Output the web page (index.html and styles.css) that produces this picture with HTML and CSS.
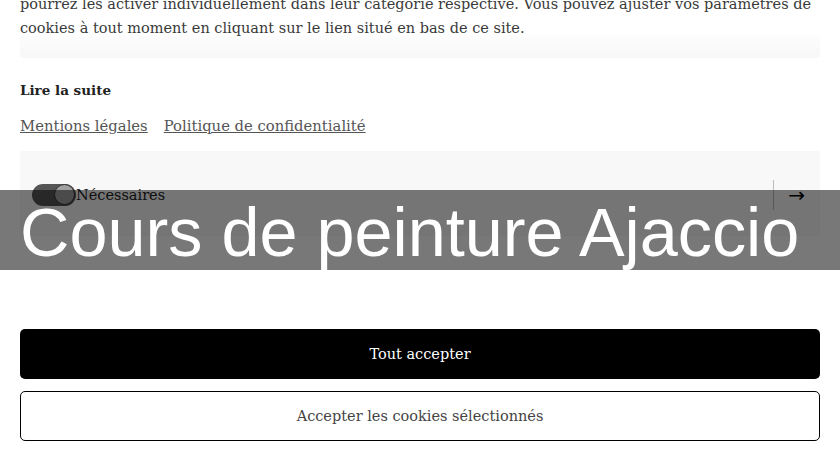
FILE: index.html
```html
<!DOCTYPE html>
<html lang="fr">
<head>
  <meta charset="UTF-8" />
  <meta name="viewport" content="width=device-width, initial-scale=1.0"/>
  <title>Cours de peinture Ajaccio</title>
  <link rel="stylesheet" href="styles.css">
</head>
<body>
  <div class="cookies">
    <p class="intro">pourrez les activer individuellement dans leur catégorie respective. Vous pouvez ajuster vos paramètres de cookies à tout moment en cliquant sur le lien situé en bas de ce site.</p>
    <div class="fade"></div>
    <p class="more">Lire la suite</p>
    <div class="links">
      <a href="#">Mentions légales</a>
      <a href="#">Politique de confidentialité</a>
    </div>
    <div class="category">
      <div class="category-row">
        <span class="toggle"><span class="knob"></span></span>
        <span class="label">Nécessaires</span>
        <span class="sep"></span>
        <span class="arrow">&rarr;</span>
      </div>
    </div>
    <button class="btn btn-dark">Tout accepter</button>
    <button class="btn btn-light">Accepter les cookies sélectionnés</button>
  </div>

  <div class="banner">Cours de peinture Ajaccio</div>
</body>
</html>
```

FILE: styles.css
```css
body {
  margin: 0;
  padding: 0 20px;
  background: #fff;
  font-family: "DejaVu Serif", serif;
  color: #3a3a3a;
  overflow: hidden;
}
.intro {
  margin: -8px 0 0;
  font-size: 14.5px;
  line-height: 24px;
}
.fade {
  height: 23px;
  margin-top: -5px;
  border-radius: 4px;
  background: linear-gradient(#fdfdfd, #f7f7f7);
}
.more {
  margin: 21px 0 0;
  font-size: 13.5px;
  font-weight: bold;
  line-height: 22px;
  color: #222;
}
.links {
  display: flex;
  gap: 16px;
  margin-top: 14px;
  line-height: 22px;
}
.links a {
  color: #555;
  font-size: 14.8px;
  text-decoration: underline;
}
.category {
  margin-top: 14px;
  height: 85px;
  background: #f8f8f8;
  display: flex;
  align-items: center;
  padding: 0 12px;
  box-sizing: border-box;
}
.category-row {
  display: flex;
  align-items: center;
  width: 100%;
  margin-top: 3px;
}
.toggle {
  position: relative;
  width: 44px;
  height: 22px;
  border-radius: 11px;
  background: #555;
}
.knob {
  position: absolute;
  right: 1px;
  top: 0;
  width: 19px;
  height: 19px;
  border-radius: 50%;
  background: #a0a0a0;
  border: 1.5px solid #333;
}
.label {
  font-size: 14.5px;
  color: #222;
}
.sep {
  margin-left: auto;
  width: 1px;
  height: 30px;
  background: #bbb;
}
.arrow {
  margin: 0 3px 0 14px;
  font-family: "DejaVu Sans", sans-serif;
  font-size: 20px;
  color: #000;
}
.btn {
  display: block;
  width: 100%;
  height: 50px;
  border-radius: 5px;
  font-family: "DejaVu Serif", serif;
  font-size: 14.5px;
}
.btn-dark {
  margin-top: 93px;
  background: #000;
  color: #fff;
  border: none;
}
.btn-light {
  margin-top: 12px;
  background: #fff;
  color: #444;
  border: 1px solid #000;
}
.banner {
  position: absolute;
  left: 0;
  right: 0;
  top: 190px;
  height: 80px;
  padding-left: 20px;
  background: rgba(0, 0, 0, 0.53);
  color: #fff;
  font-family: "Liberation Sans", Arial, sans-serif;
  font-size: 68.4px;
  line-height: 84px;
  white-space: nowrap;
  overflow: hidden;
}
```
